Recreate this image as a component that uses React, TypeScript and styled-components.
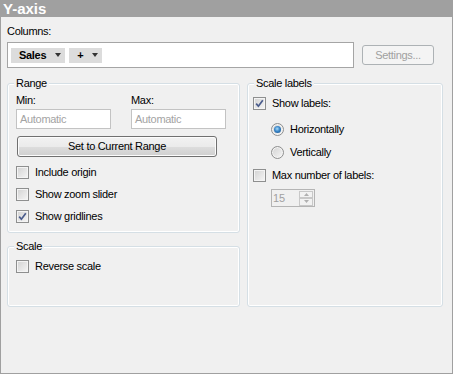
import { FC, ReactNode } from 'react';
import styled, { createGlobalStyle } from 'styled-components';

const GlobalStyle = createGlobalStyle`
  html, body {
    margin: 0;
    padding: 0;
    background: #f0f0f0;
  }

  body {
    font-family: "Liberation Sans", Arial, sans-serif;
    font-size: 11px;
    letter-spacing: -0.3px;
    color: #000;
  }

  * {
    box-sizing: border-box;
  }
`;

const StyledPanel = styled.div`
  display: flex;
  flex-direction: column;
  width: 453px;
  height: 374px;
  border: 1px solid #a0a0a0;
  background: #f0f0f0;
`;

const StyledHeader = styled.div`
  height: 16px;
  padding-left: 2px;
  background: #a0a0a0;
  color: #fff;
  font-size: 15px;
  font-weight: bold;
  line-height: 16px;
  letter-spacing: 0;
`;

const StyledBody = styled.div`
  display: flex;
  flex-direction: column;
  padding: 8px 0 0 6px;
`;

const StyledText = styled.div`
  height: 13px;
  line-height: 13px;
  white-space: nowrap;
`;

const StyledColumnsRow = styled.div`
  display: flex;
  align-items: center;
  margin-top: 4px;
`;

const StyledColumnsBox = styled.div`
  display: flex;
  align-items: center;
  gap: 4px;
  width: 347px;
  height: 26px;
  padding-left: 3px;
  border: 1px solid #a5a5a5;
  background: #fff;
`;

const StyledPill = styled.div`
  display: flex;
  align-items: center;
  gap: 9px;
  height: 15px;
  padding: 0 4px 0 8px;
  background: #dcdcdc;
  font-weight: bold;
  line-height: 15px;
`;

const StyledArrow = styled.span`
  width: 0;
  height: 0;
  border-left: 3.5px solid transparent;
  border-right: 3.5px solid transparent;
  border-top: 4px solid #333;
`;

const StyledSettingsButton = styled.div`
  width: 72px;
  height: 20px;
  margin-left: 8px;
  border: 1px solid #adb2b5;
  border-radius: 3px;
  background: #f4f4f4;
  color: #a0a0a0;
  line-height: 18px;
  text-align: center;
`;

const StyledGroupsGrid = styled.div`
  display: grid;
  grid-template-columns: 233px 196px;
  column-gap: 7px;
  margin-top: 9px;
`;

const StyledColumn = styled.div`
  display: flex;
  flex-direction: column;
  gap: 7px;
`;

const StyledGroup = styled.fieldset<{ $height: number; $inset: number }>`
  display: flex;
  flex-direction: column;
  align-items: flex-start;
  min-width: 0;
  height: ${({ $height }) => $height}px;
  margin: 0;
  padding: 0 4px 0 ${({ $inset }) => $inset}px;
  border: 1px solid #d5dfe5;
  border-radius: 3px;
  box-shadow: inset 0 0 0 1px #fff;
`;

const StyledLegend = styled.legend<{ $offset: number }>`
  margin-left: ${({ $offset }) => $offset}px;
  padding: 0 2px;
  background: #f0f0f0;
  line-height: 13px;
`;

const StyledFieldGrid = styled.div`
  display: grid;
  grid-template-columns: 95px 95px;
  column-gap: 20px;
  row-gap: 2px;
  margin-top: 4px;
`;

const StyledInput = styled.div`
  height: 20px;
  padding-left: 3px;
  border: 1px solid #c3c3c3;
  background: #fff;
  color: #a3a3a3;
  line-height: 18px;
`;

const StyledButton = styled.div`
  width: 200px;
  height: 21px;
  margin: 7px 0 0 1px;
  border: 1px solid #707070;
  border-radius: 3px;
  background: linear-gradient(#f2f2f2 0%, #ebebeb 50%, #dddddd 51%, #cfcfcf 100%);
  box-shadow: inset 0 0 0 1px #fcfcfc;
  line-height: 19px;
  text-align: center;
`;

const StyledOptionList = styled.div<{ $top: number; $indent?: number; $gap?: number }>`
  display: flex;
  flex-direction: column;
  gap: ${({ $gap }) => $gap ?? 9}px;
  margin-top: ${({ $top }) => $top}px;
  margin-left: ${({ $indent }) => $indent ?? 0}px;
`;

const StyledOption = styled.div`
  display: flex;
  align-items: center;
  gap: 6px;
  height: 13px;
  line-height: 13px;
  white-space: nowrap;
`;

const StyledBox = styled.span<{ $round?: boolean }>`
  display: flex;
  align-items: center;
  justify-content: center;
  flex: none;
  width: 13px;
  height: 13px;
  border: 1px solid #8e8f8f;
  border-radius: ${({ $round }) => ($round ? '50%' : '0')};
  background: linear-gradient(135deg, #d2d2d2 0%, #f6f6f6 100%);
  box-shadow: inset 0 0 0 1px #f4f4f4;
`;

const StyledDot = styled.span`
  width: 7px;
  height: 7px;
  border-radius: 50%;
  background: radial-gradient(circle at 45% 40%, #a9dcfb 0%, #3a86c8 45%, #104b87 100%);
`;

const StyledSpinner = styled.div`
  display: flex;
  align-items: center;
  justify-content: space-between;
  width: 44px;
  height: 18px;
  margin: 7px 0 0 18px;
  padding: 0 1px 0 1px;
  border: 1px solid #b4b4b4;
  color: #a0a0a0;
  letter-spacing: 0;
`;

const StyledSpinButtons = styled.div`
  display: flex;
  flex-direction: column;
  width: 14px;
  height: 15px;
`;

const StyledSpinButton = styled.div`
  display: flex;
  align-items: center;
  justify-content: center;
  flex: 1;
  border: 1px solid #c8c8c8;
  background: #f2f2f2;
`;

const CheckMark: FC = () => (
  <svg width="9" height="9" viewBox="0 0 9 9">
    <path d="M1.2 4.6 L3.4 7.2 L7.8 1.2" fill="none" stroke="#4a5c8c" strokeWidth="1.7" />
  </svg>
);

const SpinArrow: FC<{ up?: boolean }> = ({ up }) => (
  <svg width="5" height="3" viewBox="0 0 5 3">
    <path d={up ? 'M0 3 L2.5 0 L5 3 Z' : 'M0 0 L2.5 3 L5 0 Z'} fill="#b0b0b0" />
  </svg>
);

interface IOptionProps {
  checked?: boolean;
  round?: boolean;
  children: ReactNode;
}

const Option: FC<IOptionProps> = ({ checked, round, children }) => (
  <StyledOption>
    <StyledBox $round={round}>
      {checked && (round ? <StyledDot /> : <CheckMark />)}
    </StyledBox>
    {children}
  </StyledOption>
);

const App: FC = () => (
  <>
    <GlobalStyle />
    <StyledPanel>
      <StyledHeader>Y-axis</StyledHeader>
      <StyledBody>
        <StyledText>Columns:</StyledText>
        <StyledColumnsRow>
          <StyledColumnsBox>
            <StyledPill>
              Sales
              <StyledArrow />
            </StyledPill>
            <StyledPill>
              +
              <StyledArrow />
            </StyledPill>
          </StyledColumnsBox>
          <StyledSettingsButton>Settings...</StyledSettingsButton>
        </StyledColumnsRow>

        <StyledGroupsGrid>
          <StyledColumn>
            <StyledGroup $height={156} $inset={8}>
              <StyledLegend $offset={-2}>Range</StyledLegend>
              <StyledFieldGrid>
                <StyledText>Min:</StyledText>
                <StyledText>Max:</StyledText>
                <StyledInput>Automatic</StyledInput>
                <StyledInput>Automatic</StyledInput>
              </StyledFieldGrid>
              <StyledButton>Set to Current Range</StyledButton>
              <StyledOptionList $top={9}>
                <Option>Include origin</Option>
                <Option>Show zoom slider</Option>
                <Option checked>Show gridlines</Option>
              </StyledOptionList>
            </StyledGroup>

            <StyledGroup $height={67} $inset={8}>
              <StyledLegend $offset={-2}>Scale</StyledLegend>
              <StyledOptionList $top={7}>
                <Option>Reverse scale</Option>
              </StyledOptionList>
            </StyledGroup>
          </StyledColumn>

          <StyledGroup $height={230} $inset={5}>
            <StyledLegend $offset={1}>Scale labels</StyledLegend>
            <StyledOptionList $top={7}>
              <Option checked>Show labels:</Option>
            </StyledOptionList>
            <StyledOptionList $top={13} $indent={18} $gap={10}>
              <Option round checked>
                Horizontally
              </Option>
              <Option round>Vertically</Option>
            </StyledOptionList>
            <StyledOptionList $top={10}>
              <Option>Max number of labels:</Option>
            </StyledOptionList>
            <StyledSpinner>
              15
              <StyledSpinButtons>
                <StyledSpinButton>
                  <SpinArrow up />
                </StyledSpinButton>
                <StyledSpinButton>
                  <SpinArrow />
                </StyledSpinButton>
              </StyledSpinButtons>
            </StyledSpinner>
          </StyledGroup>
        </StyledGroupsGrid>
      </StyledBody>
    </StyledPanel>
  </>
);

export default App;
